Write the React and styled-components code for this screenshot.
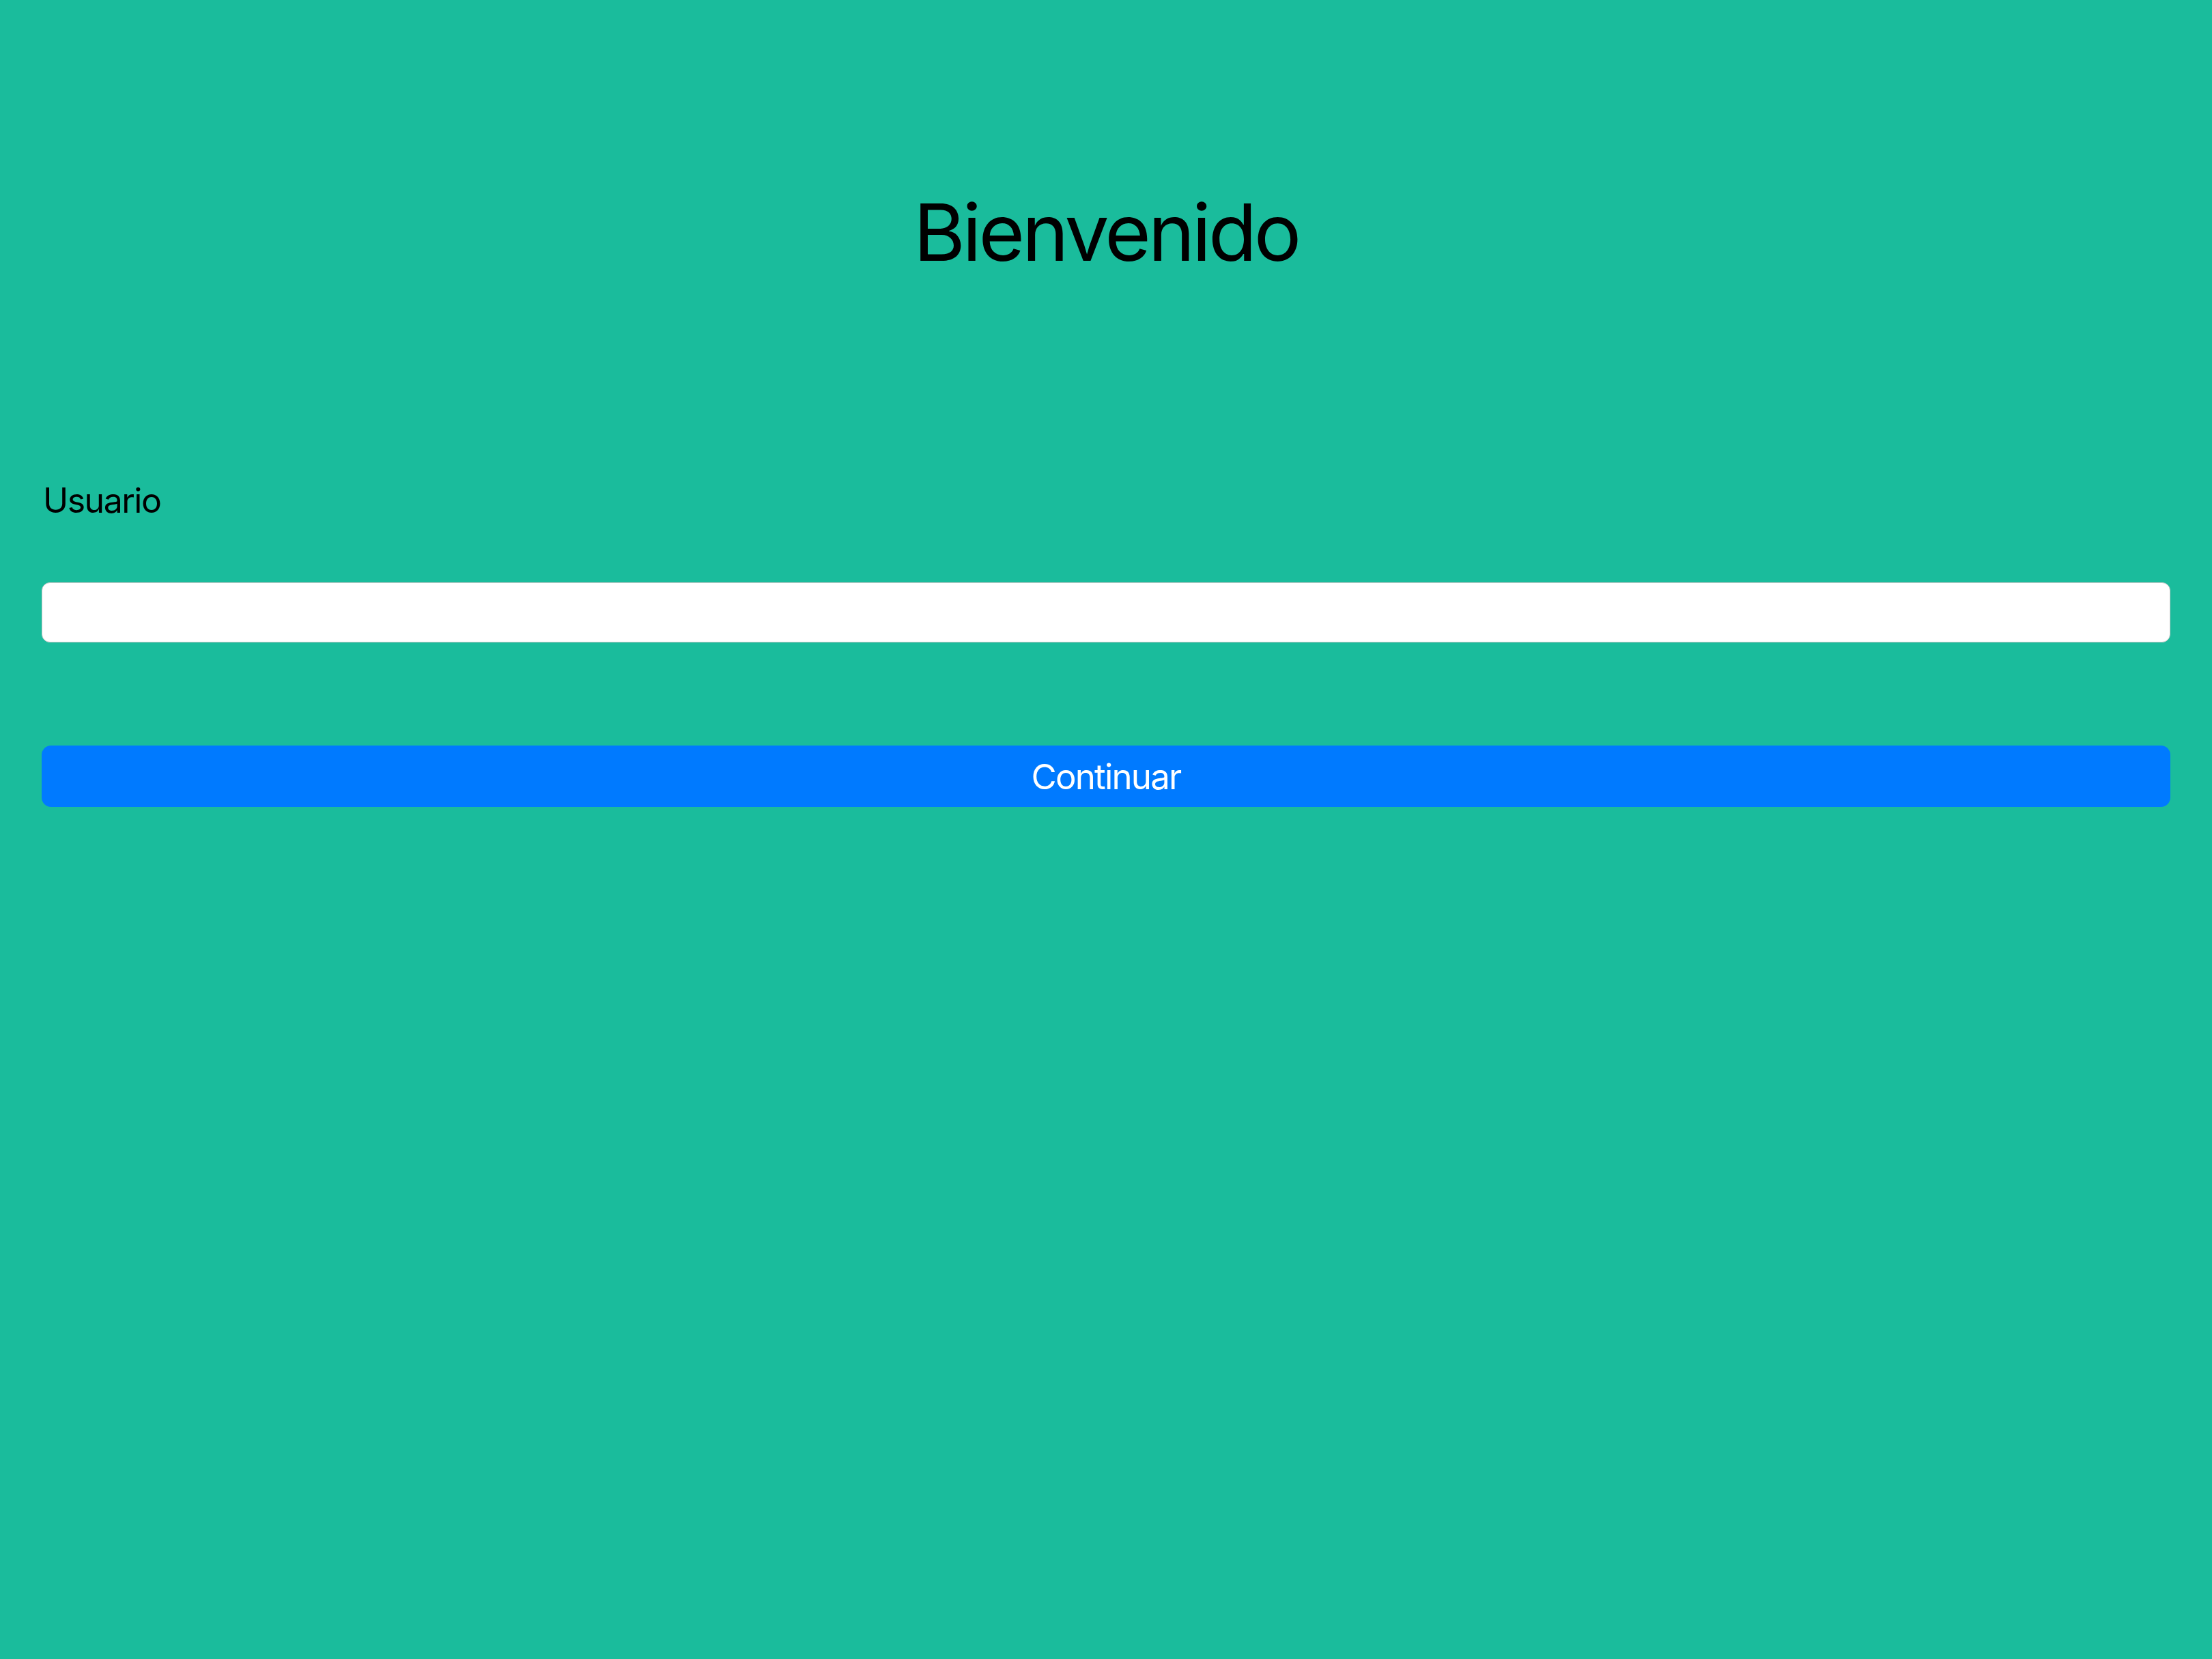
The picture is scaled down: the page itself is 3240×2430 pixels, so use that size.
import React from "react";
import styled, { createGlobalStyle } from "styled-components";

const GlobalStyle = createGlobalStyle`
  html, body {
    margin: 0;
    padding: 0;
    background-color: #1abc9c;
  }
  body {
    font-family: Inter, "Liberation Sans", sans-serif;
  }
`;

const Page = styled.div`
  min-height: 2430px;
  background-color: #1abc9c;
  padding: 0 61px;
  box-sizing: border-box;
`;

const Title = styled.h1`
  margin: 0;
  padding-top: 270px;
  text-align: center;
  font-size: 116px;
  font-weight: 400;
  letter-spacing: -4.2px;
  color: #000;
  line-height: 140px;
`;

const Form = styled.form`
  display: flex;
  flex-direction: column;
  padding-top: 291px;
`;

const Label = styled.label`
  font-size: 50px;
  letter-spacing: -1.5px;
  color: #000;
  line-height: 64px;
  margin-left: 2px;
`;

const Input = styled.input`
  margin-top: 88px;
  height: 88px;
  border: 1px solid #c8c8c8;
  border-radius: 12px;
  background-color: #fff;
  box-sizing: border-box;
  padding: 0 20px;
  font-size: 48px;
  font-family: inherit;
  outline: none;
`;

const Button = styled.button`
  margin-top: 151px;
  height: 90px;
  border: none;
  border-radius: 14px;
  background-color: #007aff;
  color: #fff;
  font-family: inherit;
  font-size: 51px;
  letter-spacing: -1.8px;
  cursor: pointer;
`;

const App = () => {
  return (
    <Page>
      <GlobalStyle />
      <Title>Bienvenido</Title>
      <Form onSubmit={(e) => e.preventDefault()}>
        <Label htmlFor="usuario">Usuario</Label>
        <Input id="usuario" type="text" />
        <Button type="submit">Continuar</Button>
      </Form>
    </Page>
  );
};

export default App;
